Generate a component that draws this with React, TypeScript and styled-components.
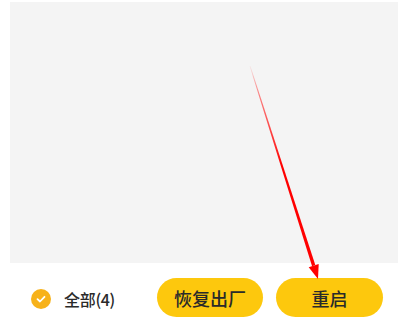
import React from "react";
import styled, { createGlobalStyle } from "styled-components";

const Global = createGlobalStyle`
  html, body { margin: 0; padding: 0; background: #ffffff; }
  body { font-family: "Noto Sans CJK SC", "Noto Sans", sans-serif; }
`;

const Page = styled.div`
  position: relative;
  width: 400px;
  height: 322px;
  overflow: hidden;
  background: #ffffff;
  display: flex;
  flex-direction: column;
`;

const Panel = styled.div`
  margin: 2px 2px 0 10px;
  height: 261px;
  background: #f4f4f4;
`;

const Bar = styled.div`
  display: flex;
  align-items: flex-start;
  padding: 15px 17px 0 31px;
`;

const CheckRow = styled.div`
  flex: 1;
  display: flex;
  align-items: center;
  gap: 13px;
  margin-top: 11px;
  height: 20px;
`;

const CheckCircle = styled.span`
  width: 20px;
  height: 20px;
  border-radius: 50%;
  background: #f7b21a;
  display: flex;
  align-items: center;
  justify-content: center;
`;

const Label = styled.span`
  font-size: 16px;
  font-weight: 500;
  color: #2a2a2a;
  line-height: 20px;
  letter-spacing: -0.3px;
`;

const Buttons = styled.div`
  display: flex;
  gap: 13px;
`;

const Pill = styled.button<{ $w: number }>`
  width: ${(p) => p.$w}px;
  height: 39px;
  border: none;
  border-radius: 20px;
  background: #fdc80d;
  color: #2a2a2a;
  font-family: "Noto Sans CJK SC", "Noto Sans", sans-serif;
  font-size: 18px;
  font-weight: 500;
  padding: 0;
  display: flex;
  align-items: center;
  justify-content: center;
`;

const Overlay = styled.svg`
  position: absolute;
  left: 0;
  top: 0;
  pointer-events: none;
`;

export default function App() {
  return (
    <>
      <Global />
      <Page>
        <Panel />
        <Bar>
          <CheckRow>
            <CheckCircle>
              <svg width="12" height="12" viewBox="0 0 12 12">
                <path d="M2.5 6.2 L5 8.5 L9.5 3.8" fill="none" stroke="#ffffff" strokeWidth="1.8" strokeLinecap="round" strokeLinejoin="round" />
              </svg>
            </CheckCircle>
            <Label>全部(4)</Label>
          </CheckRow>
          <Buttons>
            <Pill $w={106}>恢复出厂</Pill>
            <Pill $w={107}>重启</Pill>
          </Buttons>
        </Bar>
        <Overlay width="400" height="322" viewBox="0 0 400 322">
          <defs>
            <linearGradient id="fade" gradientUnits="userSpaceOnUse" x1="250" y1="66" x2="314" y2="266">
              <stop offset="0" stopColor="#ff0000" stopOpacity="0.05" />
              <stop offset="0.15" stopColor="#ff3030" stopOpacity="0.6" />
              <stop offset="0.5" stopColor="#ff0000" stopOpacity="1" />
              <stop offset="1" stopColor="#ff0000" stopOpacity="1" />
            </linearGradient>
          </defs>
          <polygon
            points="250.4,65.9 249.6,66.1 312.1,266.3 315.3,265.1"
            fill="url(#fade)"
          />
          <polygon points="318.7,264.1 308.7,267.3 318,279" fill="#ff0000" />
        </Overlay>
      </Page>
    </>
  );
}
